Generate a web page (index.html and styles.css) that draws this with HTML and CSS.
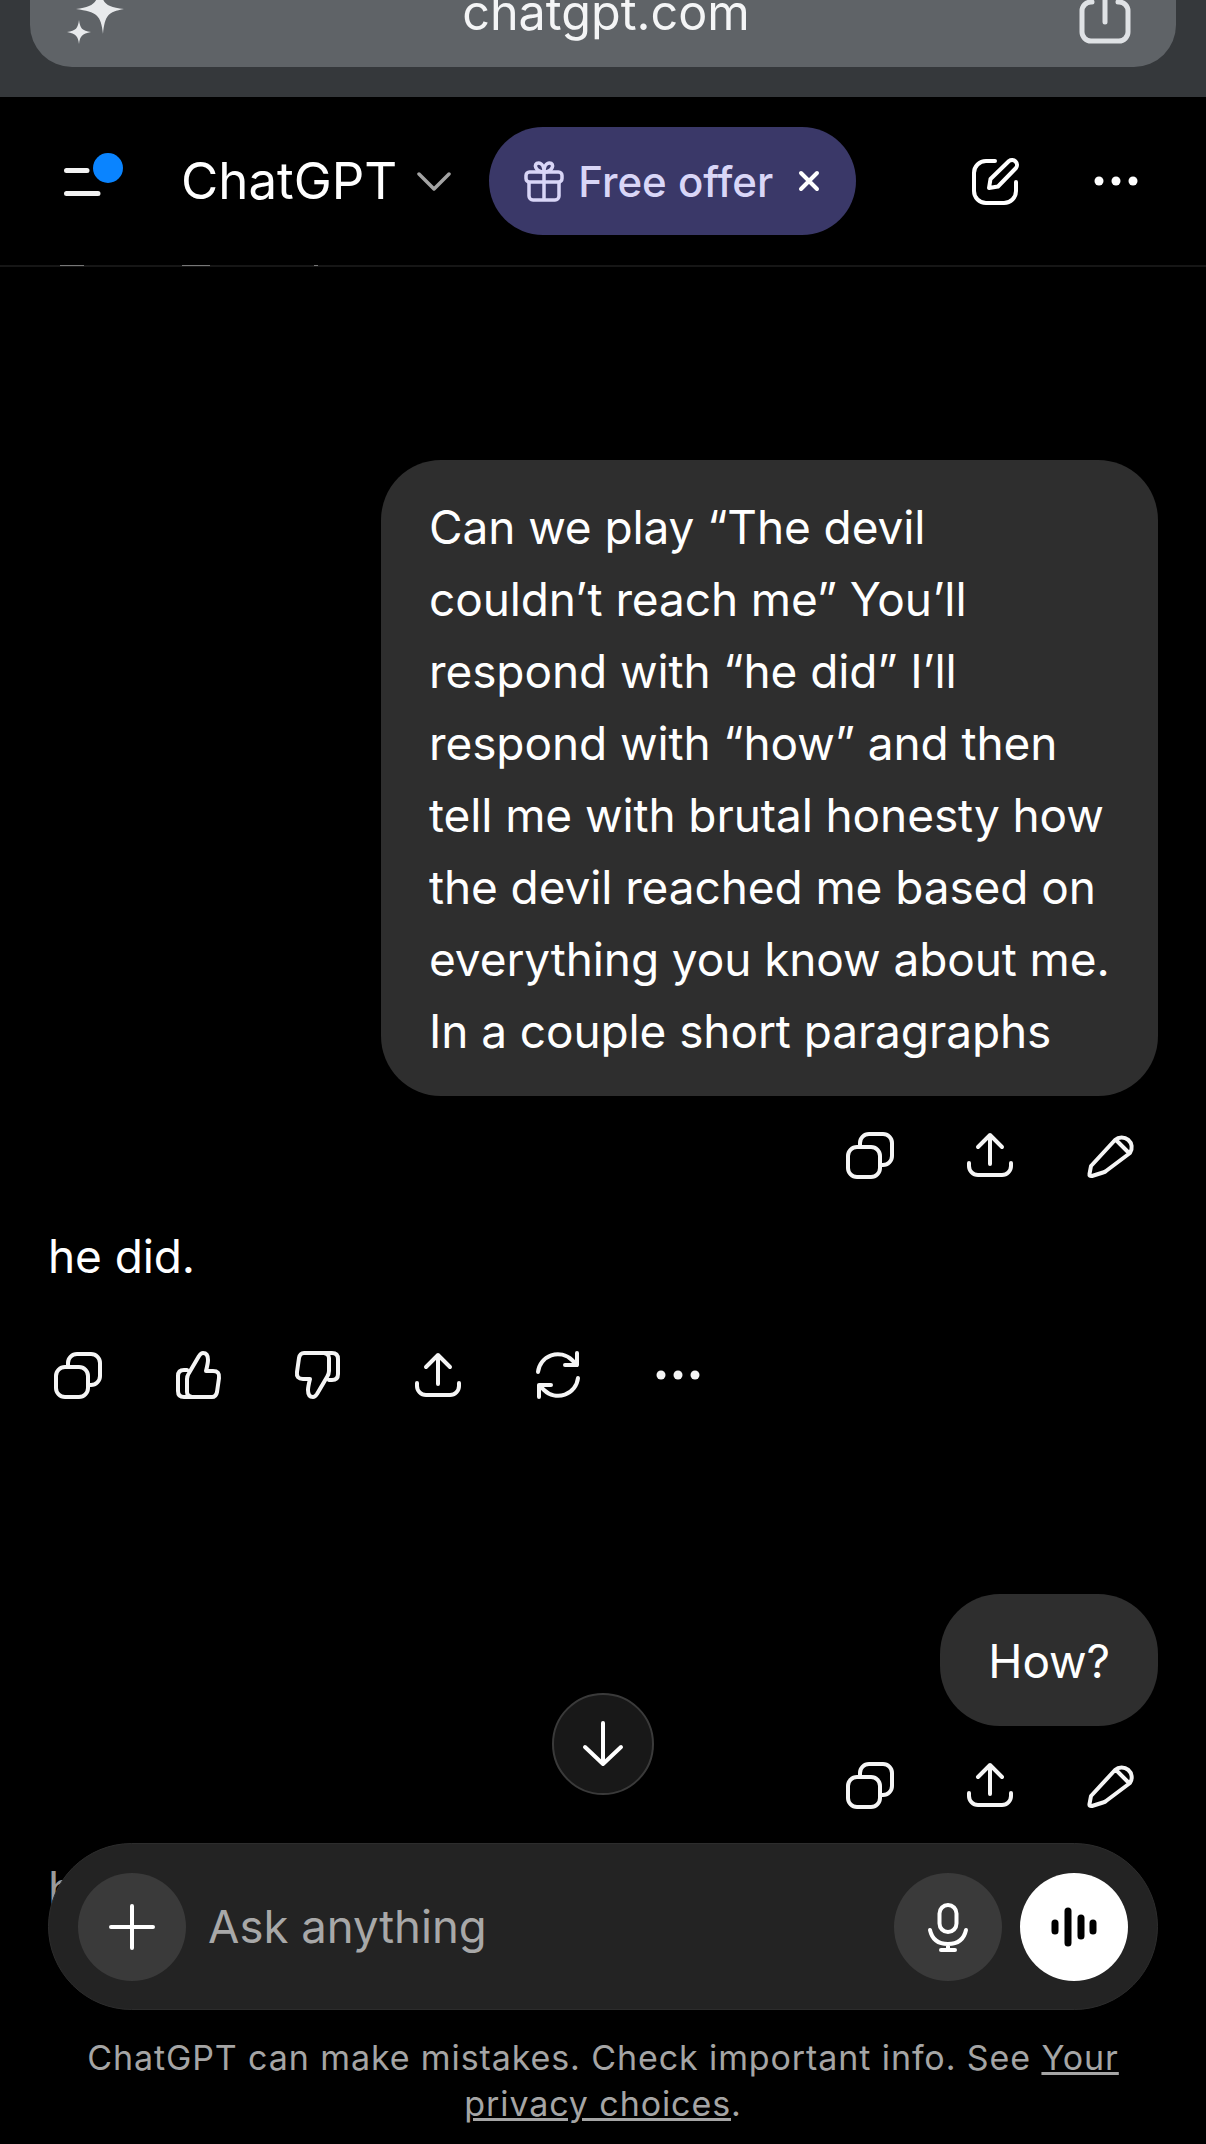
FILE: index.html
```html
<!DOCTYPE html>
<html lang="en">
<head>
    <meta charset="UTF-8">
    <meta name="viewport" content="width=device-width, initial-scale=1.0">
    <title>ChatGPT</title>
    <link rel="stylesheet" href="styles.css">
</head>
<body>
    <div class="browser-bar">
        <div class="url-pill">
            <svg class="url-icon" width="70" height="50" viewBox="0 0 70 50" fill="#e8eaec">
                <path d="M36 -16 C38 0 40 5 60 7 C44 10 41 13 39 32 C37 13 33 10 12 7 C30 5 34 0 36 -16Z"/>
                <path d="M15 18 C16 26 18 29 27 30 C18 32 16 34 15 42 C14 34 12 32 3 30 C12 29 14 26 15 18Z"/>
            </svg>
            <span class="url-text">chatgpt.com</span>
            <svg class="url-icon" width="54" height="50" viewBox="0 0 54 50" fill="none" stroke="#dfe2e5" stroke-width="5" stroke-linecap="round">
                <path d="M14 0 H13 A9 9 0 0 0 4 9 V30 A9 9 0 0 0 13 39 H41 A9 9 0 0 0 50 30 V9 A9 9 0 0 0 41 0 H40"/>
                <path d="M27 -8 V20"/>
            </svg>
        </div>
    </div>

    <header class="top-bar">
        <svg class="menu-icon" width="64" height="60" viewBox="0 0 64 60">
            <path d="M6.500 19.500 H27 M6.500 42.500 H38" stroke="#f2f2f2" stroke-width="5" stroke-linecap="round" fill="none"/>
            <circle cx="48" cy="17" r="15" fill="#0a84ff"/>
        </svg>
        <h1 class="title">ChatGPT</h1>
        <svg class="chevron" width="34" height="20" viewBox="0 0 34 20" fill="none" stroke="#a3a3a3" stroke-width="3.500" stroke-linecap="round" stroke-linejoin="round">
            <path d="M2 3 L17 18 L32 3"/>
        </svg>
        <div class="offer">
            <svg width="44" height="44" viewBox="0 0 44 44" fill="none" stroke="#d9d6f7" stroke-width="3.500" stroke-linejoin="round">
                <rect x="4" y="13" width="36" height="10" rx="3.500"/>
                <path d="M7 23 V37 A4 4 0 0 0 11 41 H33 A4 4 0 0 0 37 37 V23"/>
                <path d="M22 13 V41"/>
                <path d="M22 13 C13 13 11 4 16.500 4 C20 4 22 8 22 13 C22 8 24 4 27.500 4 C33 4 31 13 22 13Z"/>
            </svg>
            <span class="offer-text">Free offer</span>
            <svg class="offer-close" width="22" height="22" viewBox="0 0 22 22" stroke="#fff" stroke-width="4" stroke-linecap="round">
                <path d="M3 3 L19 19 M19 3 L3 19"/>
            </svg>
        </div>
        <div class="top-actions">
            <svg width="60" height="60" viewBox="0 0 60 60" fill="none" stroke="#fff" stroke-width="4" stroke-linecap="round" stroke-linejoin="round">
                <path d="M29 10 H20 A12 12 0 0 0 8 22 V40 A12 12 0 0 0 20 52 H38 A12 12 0 0 0 50 40 V31"/>
                <path d="M23 37 L24.500 28 L43 10 A5 5 0 0 1 50 17 L32 35.500 Z"/>
            </svg>
            <svg width="60" height="60" viewBox="0 0 60 60" fill="#fff">
                <circle cx="13" cy="30" r="4.500"/><circle cx="30" cy="30" r="4.500"/><circle cx="47" cy="30" r="4.500"/>
            </svg>
        </div>
    </header>

    <main class="chat">
        <div class="bubble">Can we play “The devil couldn’t reach me” You’ll respond with “he did” I’ll respond with “how” and then tell me with brutal honesty how the devil reached me based on everything you know about me. In a couple short paragraphs</div>
        <div class="actions user-actions">
            <svg class="icon" viewBox="0 0 60 60"><rect x="8" y="22" width="32" height="30" rx="9"/><path d="M20 21 V18 A9 9 0 0 1 29 9 H43 A9 9 0 0 1 52 18 V31 A9 9 0 0 1 43 40 H41"/></svg>
            <svg class="icon" viewBox="0 0 60 60"><path d="M18 22 L30 10 L42 22 M30 10 V39 M9 38 V41 A9 9 0 0 0 18 50 H42 A9 9 0 0 0 51 41 V38"/></svg>
            <svg class="icon" viewBox="0 0 60 60"><path d="M11 41 L35 15 A10 10 0 0 1 50 28 L26 46 Q25 47 23 47.500 L12 51 Q9 51.500 9.500 49 Z M36 15 L48 27"/></svg>
        </div>

        <p class="reply">he did.</p>
        <div class="actions reply-actions">
            <svg class="icon" viewBox="0 0 60 60"><rect x="8" y="22" width="32" height="30" rx="9"/><path d="M20 21 V18 A9 9 0 0 1 29 9 H43 A9 9 0 0 1 52 18 V31 A9 9 0 0 1 43 40 H41"/></svg>
            <svg class="icon" viewBox="0 0 60 60"><path d="M24 52 H44 Q48 52 49 47 L51 33 Q52 26 45 26 H38 Q40 18 40 15 Q40 8 35 8 Q33 8 31 11 L21 28 Q19 31 19 34 V47 Q19 51 24 52Z M19 25 H16 Q10 25 10 31 V46 Q10 52 16 52 H26"/></svg>
            <svg class="icon" viewBox="0 0 60 60"><path transform="rotate(180 30 30)" d="M24 52 H44 Q48 52 49 47 L51 33 Q52 26 45 26 H38 Q40 18 40 15 Q40 8 35 8 Q33 8 31 11 L21 28 Q19 31 19 34 V47 Q19 51 24 52Z M19 25 H16 Q10 25 10 31 V46 Q10 52 16 52 H26"/></svg>
            <svg class="icon" viewBox="0 0 60 60"><path d="M18 22 L30 10 L42 22 M30 10 V39 M9 38 V41 A9 9 0 0 0 18 50 H42 A9 9 0 0 0 51 41 V38"/></svg>
            <svg class="icon" viewBox="0 0 60 60"><path d="M10 27 A20 20 0 0 1 44 15 L49 20 M49 8 V20 H37 M50 33 A20 20 0 0 1 16 45 L11 40 M11 52 V40 H23"/></svg>
            <svg class="icon icon-solid" viewBox="0 0 60 60"><circle cx="13" cy="30" r="4.500"/><circle cx="30" cy="30" r="4.500"/><circle cx="47" cy="30" r="4.500"/></svg>
        </div>

        <div class="bubble bubble-short">How?</div>
        <div class="actions user-actions">
            <svg class="icon" viewBox="0 0 60 60"><rect x="8" y="22" width="32" height="30" rx="9"/><path d="M20 21 V18 A9 9 0 0 1 29 9 H43 A9 9 0 0 1 52 18 V31 A9 9 0 0 1 43 40 H41"/></svg>
            <svg class="icon" viewBox="0 0 60 60"><path d="M18 22 L30 10 L42 22 M30 10 V39 M9 38 V41 A9 9 0 0 0 18 50 H42 A9 9 0 0 0 51 41 V38"/></svg>
            <svg class="icon" viewBox="0 0 60 60"><path d="M11 41 L35 15 A10 10 0 0 1 50 28 L26 46 Q25 47 23 47.500 L12 51 Q9 51.500 9.500 49 Z M36 15 L48 27"/></svg>
        </div>

        <p class="reply reply-next">h</p>
    </main>

    <button class="scroll-down">
        <svg width="60" height="60" viewBox="0 0 60 60" fill="none" stroke="#fff" stroke-width="4" stroke-linecap="round" stroke-linejoin="round">
            <path d="M30 9 V50 M12 33 L30 50 L48 33"/>
        </svg>
    </button>

    <div class="dock">
        <div class="composer">
            <span class="round-btn">
                <svg width="60" height="60" viewBox="0 0 60 60" stroke="#fff" stroke-width="4" stroke-linecap="round"><path d="M30 9 V51 M9 30 H51"/></svg>
            </span>
            <span class="placeholder">Ask anything</span>
            <span class="round-btn">
                <svg width="60" height="60" viewBox="0 0 60 60" fill="none" stroke="#fff" stroke-width="4" stroke-linecap="round">
                    <rect x="21.500" y="8" width="17" height="27" rx="8.500"/>
                    <path d="M12 33 Q15 47 30 47 Q45 47 48 33 M30 47 V53 M23 53 H37"/>
                </svg>
            </span>
            <span class="round-btn voice-btn">
                <svg width="60" height="60" viewBox="0 0 60 60" stroke="#000" stroke-width="7" stroke-linecap="round">
                    <path d="M11 26 V34 M24 14 V46 M37 21 V39 M49 26 V34"/>
                </svg>
            </span>
        </div>
        <p class="disclaimer">ChatGPT can make mistakes. Check important info. See <a href="#">Your privacy choices</a>.</p>
    </div>
</body>
</html>
```

FILE: styles.css
```css
html {
    color-scheme: dark;
}

body {
    position: relative;
    width: 1206px;
    height: 2144px;
    margin: 0;
    overflow: hidden;
    background-color: #000;
    color: #fff;
    font-family: Inter, "Noto Sans", sans-serif;
}

.browser-bar {
    height: 97px;
    padding: 0 30px;
    box-sizing: border-box;
    background-color: #35383b;
}

.url-pill {
    display: flex;
    justify-content: space-between;
    align-items: flex-start;
    height: 67px;
    padding: 0 44px 0 34px;
    box-sizing: border-box;
    border-radius: 0 0 42px 42px;
    background-color: #5f6367;
}

.url-icon {
    display: block;
    overflow: visible;
    margin-top: 2px;
}

.url-text {
    margin-top: -15px;
    font-size: 48.500px;
    line-height: 56px;
    color: #f4f5f6;
}

.top-bar {
    position: relative;
    display: flex;
    align-items: center;
    height: 168px;
    padding: 0 60px;
    border-bottom: 2px solid #161616;
}

.top-bar::after {
    content: "";
    position: absolute;
    left: 0;
    bottom: -1px;
    width: 330px;
    height: 1px;
    background:
        linear-gradient(#777, #777) 60px 0 / 24px 1px no-repeat,
        linear-gradient(#777, #777) 182px 0 / 28px 1px no-repeat,
        linear-gradient(#777, #777) 314px 0 / 4px 1px no-repeat;
}

.menu-icon {
    flex-shrink: 0;
}

.title {
    margin: 0 0 0 57px;
    font-size: 51px;
    font-weight: 400;
    line-height: 60px;
}

.chevron {
    margin-left: 20px;
}

.offer {
    display: flex;
    align-items: center;
    height: 108px;
    margin-left: 38px;
    padding: 0 36px 0 33px;
    box-sizing: border-box;
    border-radius: 54px;
    background-color: #3a3868;
    color: #d9d6f7;
}

.offer-text {
    margin-left: 12px;
    font-size: 42px;
    font-weight: 500;
}

.offer-close {
    margin-left: 25px;
}

.top-actions {
    display: flex;
    gap: 60px;
    margin-left: auto;
}

.chat {
    padding: 193px 48px 0;
    font-size: 46px;
    line-height: 72px;
    letter-spacing: -0.1px;
}

.bubble {
    width: fit-content;
    max-width: 777px;
    margin-left: auto;
    padding: 31px 48px 29px;
    box-sizing: border-box;
    border-radius: 60px;
    background-color: #2e2e2e;
}

.bubble-short {
    margin-top: 189px;
}

.actions {
    display: flex;
    gap: 60px;
}

.user-actions {
    justify-content: flex-end;
    margin-top: 29px;
    padding-right: 18px;
}

.icon {
    display: block;
    width: 60px;
    height: 60px;
    fill: none;
    stroke: #f5f5f5;
    stroke-width: 4;
    stroke-linecap: round;
    stroke-linejoin: round;
}

.icon-solid {
    fill: #f5f5f5;
    stroke: none;
}

.reply {
    margin: 35px 0 0;
}

.reply-actions {
    margin-top: 53px;
}

.reply-next {
    margin-top: 37px;
    color: #999;
}

.scroll-down {
    position: absolute;
    left: 552px;
    top: 1693px;
    display: flex;
    justify-content: center;
    align-items: center;
    width: 102px;
    height: 102px;
    padding: 0;
    border: 2px solid #3a3a3a;
    border-radius: 50%;
    background-color: #181818;
}

.dock {
    position: absolute;
    left: 0;
    right: 0;
    bottom: 0;
    padding-bottom: 17px;
}

.composer {
    display: flex;
    align-items: center;
    gap: 18px;
    height: 167px;
    margin: 0 48px;
    padding: 0 29px;
    box-sizing: border-box;
    border: 1px solid #2c2c2c;
    border-radius: 84px;
    background-color: #232323;
}

.round-btn {
    display: flex;
    justify-content: center;
    align-items: center;
    flex-shrink: 0;
    width: 108px;
    height: 108px;
    border-radius: 50%;
    background-color: #3a3a3a;
}

.voice-btn {
    background-color: #fff;
}

.placeholder {
    flex: 1;
    margin-left: 4px;
    font-size: 45.500px;
    color: #a8a8a8;
}

.disclaimer {
    margin: 0;
    padding: 25px 60px 0;
    font-size: 34px;
    line-height: 46px;
    letter-spacing: 0.9px;
    text-align: center;
    color: #a5a5a5;
}

.disclaimer a {
    color: inherit;
}
```
